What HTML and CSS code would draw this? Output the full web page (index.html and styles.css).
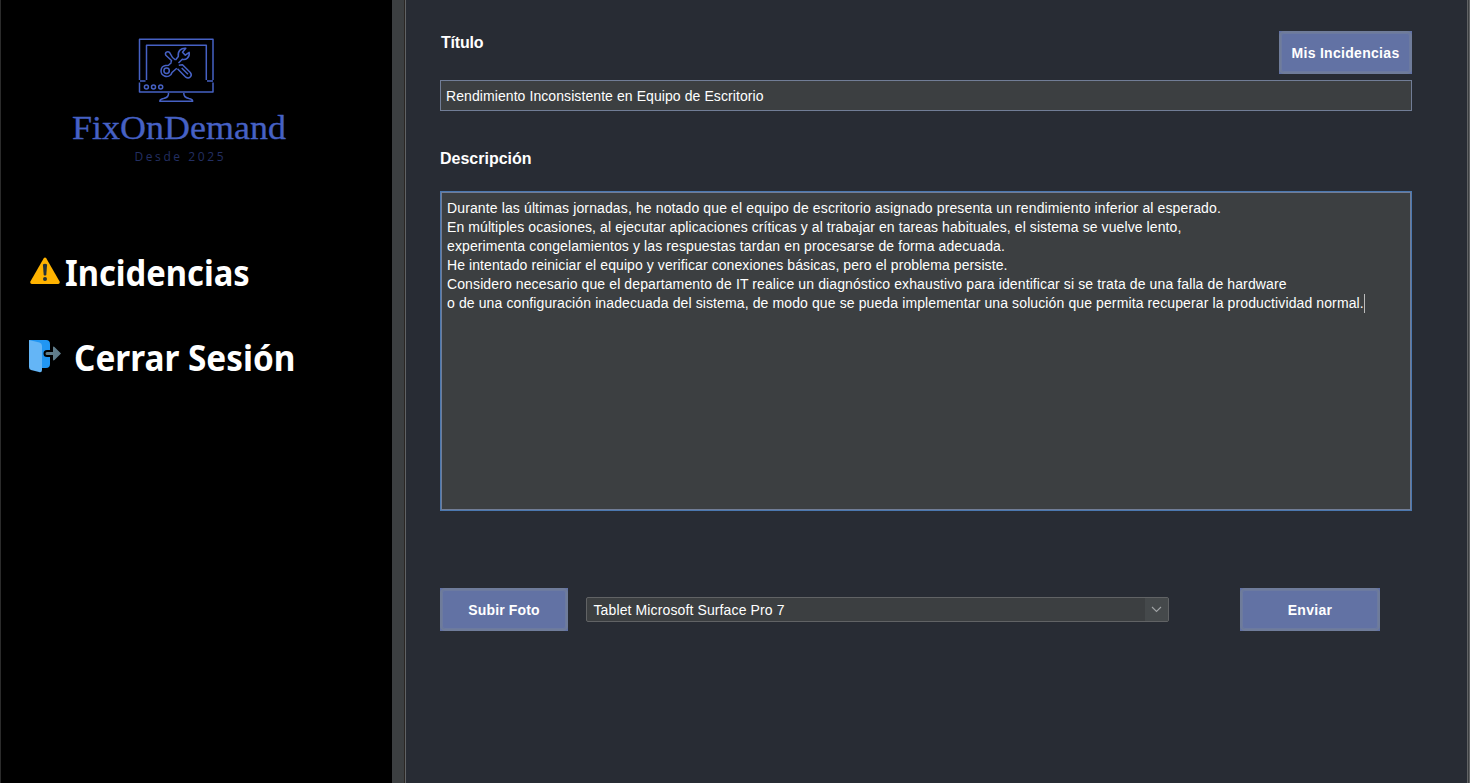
FILE: index.html
```html
<!DOCTYPE html>
<html lang="es">
<head>
<meta charset="utf-8">
<title>FixOnDemand</title>
<link rel="stylesheet" href="styles.css">
</head>
<body>
<div class="app">
  <nav class="sidebar">
    <svg class="logo" viewBox="60 25 240 150" width="240" height="150">
      <g class="logo-lines">
        <path d="M139.5 80V39.3H213V80M139.5 82.5V92H213V82.5M140 81H145.5M207 81H213M146.5 80V45.3H206.3V80"/>
        <circle cx="146.4" cy="87" r="2"/><circle cx="153.5" cy="87" r="2"/><circle cx="160.7" cy="87" r="2"/>
        <path d="M168.5 93Q169 97.500 163.500 98.500Q160 99 159.800 101.200H192.700Q192.500 99 189 98.500Q183.500 97.500 183.800 93"/>
        <circle cx="166.600" cy="70.800" r="2.700"/>
        <path d="M176.800 68.200L172 72.500C171 76.500 167 77 164.500 76C159.500 74 160 66.500 165.500 65.500L168.500 65.300L171.500 62.500M175.500 60L178.300 56.500C177.500 51 181 47.800 185.800 48.200L182.500 52.200L185.300 55.200L189.200 52.400C190 57.500 185.800 60.300 182.300 59.300L178.500 63"/>
        <path d="M171 62.500L171.500 60.500L165.800 55.300C164.500 52.500 167.500 50.800 169.500 52.300L172.500 57.500L175.500 60"/>
        <path d="M178.800 65.300L182.500 64.800L190.300 72.500C193 76 189 79.500 185.800 77.200L177.500 68.800M181.700 68L188 74.300"/>
      </g>
      <text class="logo-name" x="72" y="139.300" textLength="214" lengthAdjust="spacingAndGlyphs">FixOnDemand</text>
      <text class="logo-tag" x="134.500" y="161" textLength="89">Desde 2025</text>
    </svg>
    <a class="item incidents">
      <svg viewBox="0 0 32 30" width="32" height="30"><path d="M14.600 2.500Q16 .5 17.400 2.500L30.600 25.500Q31.200 27.800 29 28H3Q.8 27.800 1.400 25.500Z" fill="#ffb300"/><path d="M13.900 8.500Q16 6.800 18.100 8.500L17.300 19Q16 20.200 14.700 19Z" fill="#263238"/><circle cx="16" cy="23" r="2" fill="#263238"/></svg>
      <span>Incidencias</span>
    </a>
    <a class="item logout">
      <svg viewBox="0 0 34 34" width="34" height="34"><path d="M1 1H18Q22 1 22 5V11H19Q15.500 11 15.500 14.500Q15.500 18 19 18H22V25Q22 29 18 29H12Z" fill="#2196f3"/><path d="M1 1L11.500 3.500Q14 4.200 14 7V31Q14 33.800 11 33L3 31Q1 30.300 1 28Z" fill="#64b5f6"/><path d="M19 13H25V8.500Q25 7 26.500 8L33 14.500L26.500 21Q25 22 25 20.500V16H19Q17.500 16 17.500 14.500Q17.500 13 19 13Z" fill="#607d8b"/></svg>
      <span>Cerrar Sesión</span>
    </a>
  </nav>
  <div class="divider"></div>
  <main class="panel">
    <header class="top">
      <h2 class="label">Título</h2>
      <button class="btn mine">Mis Incidencias</button>
    </header>
    <div class="field">Rendimiento Inconsistente en Equipo de Escritorio</div>
    <h2 class="label desc">Descripción</h2>
    <div class="area">
      <div class="wide">Durante las últimas jornadas, he notado que el equipo de escritorio asignado presenta un rendimiento inferior al esperado.</div>
      <div class="snug">En múltiples ocasiones, al ejecutar aplicaciones críticas y al trabajar en tareas habituales, el sistema se vuelve lento,</div>
      <div>experimenta congelamientos y las respuestas tardan en procesarse de forma adecuada.</div>
      <div class="snug">He intentado reiniciar el equipo y verificar conexiones básicas, pero el problema persiste.</div>
      <div>Considero necesario que el departamento de IT realice un diagnóstico exhaustivo para identificar si se trata de una falla de hardware</div>
      <div class="last">o de una configuración inadecuada del sistema, de modo que se pueda implementar una solución que permita recuperar la productividad normal.<i class="caret"></i></div>
    </div>
    <footer class="actions">
      <button class="btn photo">Subir Foto</button>
      <div class="select"><span>Tablet Microsoft Surface Pro 7</span><svg class="arrow" viewBox="0 0 23 23" width="23" height="23"><path d="M7 9L11.500 13.500L16 9" fill="none" stroke="#a0a3a5" stroke-width="1.1"/></svg></div>
      <button class="btn send">Enviar</button>
    </footer>
  </main>
  <div class="edge"></div>
</div>
</body>
</html>
```
FILE: styles.css
```css
* { box-sizing: border-box; }
body { margin: 0; background: #282c34; color: #fff; font-family: "Liberation Sans", Arial, sans-serif; font-size: 14px; overflow: hidden; }
.app { display: flex; width: 1470px; height: 783px; }
.sidebar { width: 392px; background: #000; border-left: 1px solid #2b2b2b; display: flex; flex-direction: column; }
.logo { display: block; margin: 25px 0 0 59px; flex: none; }
.logo-lines { fill: none; stroke: #4661c4; stroke-width: 1.5; stroke-linejoin: round; }
.logo-name { font: 33.5px "Liberation Serif", serif; fill: #4661c4; stroke: #4661c4; stroke-width: .3; }
.logo-tag { font: 12px "Open Sans", sans-serif; fill: #232f62; }
.item { display: flex; height: 50px; font: bold 36px/50px "Noto Sans", sans-serif; white-space: nowrap; }
.item svg { flex: none; }
.item span { transform-origin: left center; }
.incidents { margin: 73px 0 0 28px; }
.incidents svg { margin-top: 8px; }
.incidents span { margin-left: 4px; transform: scaleX(.908); }
.logout { margin: 35px 0 0 27px; }
.logout svg { margin-top: 6px; }
.logout span { margin-left: 12px; transform: scaleX(.926); }
.divider { width: 14px; background: #3c3f41; border-right: 1px solid #616365; box-shadow: inset -1px 0 #2b2724; }
.panel { flex: 1; padding: 31px 55px 0 34px; }
.edge { width: 3px; border-left: 1px solid #616365; border-right: 1px solid #616365; background: #3c3f41; }
.top { display: flex; justify-content: space-between; height: 49px; }
.label { margin: 0; font-size: 16px; line-height: 24px; }
.top .label { padding-left: 1px; letter-spacing: -.2px; }
.desc { margin-top: 36px; height: 22px; }
.btn { height: 43px; padding: 0; border: 0; background: #6272a4; color: #fff; font: bold 14px "Liberation Sans", Arial, sans-serif; letter-spacing: .3px; white-space: nowrap; position: relative; }
.btn::before { content: ""; position: absolute; inset: 0; border: 2px solid #6f7c9a; border-radius: 5px; box-shadow: 0 0 0 1px #6c7aa0 inset; }
.mine { width: 133px; }
.photo { width: 128px; letter-spacing: .15px; }
.send { width: 140px; }
.field { width: 972px; height: 31px; border: 1px solid #717d96; background: #3c3f41; padding-left: 5px; line-height: 30px; letter-spacing: .08px; white-space: nowrap; }
.area { width: 972px; height: 320px; margin-top: 22px; padding: 7px 0 0 6px; border: 1px solid #4b78b0; box-shadow: inset 0 0 0 1px #717d96; background: #3c3f41; line-height: 19px; letter-spacing: .112px; white-space: nowrap; }
.wide { letter-spacing: .124px; }
.snug { letter-spacing: .088px; }
.last { display: flex; }
.caret { width: 1px; height: 19px; background: #bbb; }
.actions { display: flex; margin-top: 77px; }
.select { display: flex; justify-content: space-between; width: 583px; height: 25px; margin: 9px 71px 0 18px; border: 1px solid #616365; border-radius: 2px; background: #3c3f41; padding-left: 6.5px; line-height: 24px; letter-spacing: .12px; }
.arrow { background: #45494b; }
```
